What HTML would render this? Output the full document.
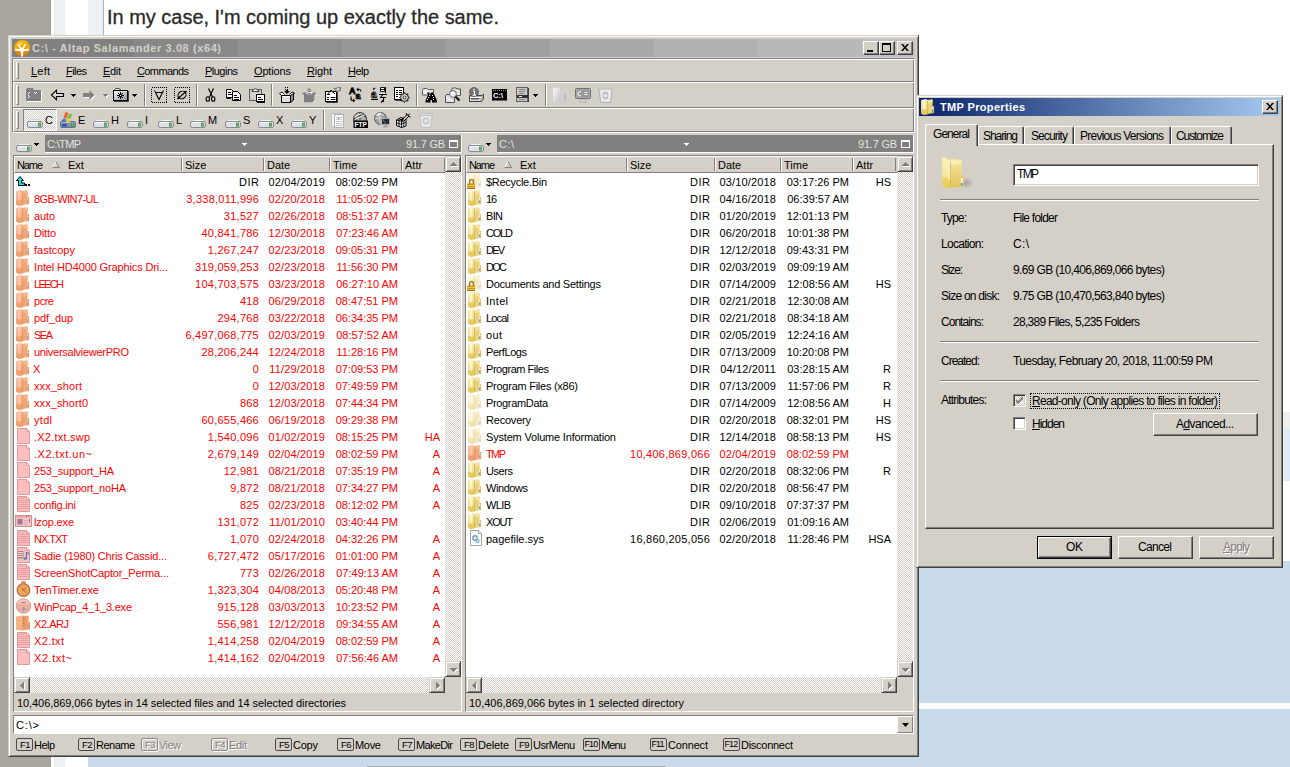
<!DOCTYPE html><html><head><meta charset="utf-8"><title>Altap Salamander</title><style>
html,body{margin:0;padding:0}
body{width:1290px;height:767px;overflow:hidden;background:#fff;position:relative;font:11px "Liberation Sans",sans-serif;color:#000}
body div{position:absolute;box-sizing:border-box}
.t{white-space:nowrap;line-height:13px;height:13px}
.r{color:#f00}
.n{letter-spacing:.25px}
.nm{letter-spacing:-.1px}
.g{color:#808080}
.d{font-size:12px;line-height:14px;height:14px}
u{text-decoration:underline}
.btn{background:#d4d0c8;border:1px solid;border-color:#fff #404040 #404040 #fff;box-shadow:inset -1px -1px 0 #808080}
.sb{background:#d4d0c8;border:1px solid;border-color:#d4d0c8 #404040 #404040 #d4d0c8;box-shadow:inset 1px 1px 0 #fff, inset -1px -1px 0 #808080}
.chk{background-color:#eae8e4;background-image:conic-gradient(#fff 25%,#d4d0c8 0 50%,#fff 0 75%,#d4d0c8 0);background-size:2px 2px}
svg{position:absolute;overflow:visible}
</style></head><body>
<div style="left:0px;top:0px;width:51px;height:767px;background:#aaa59f"></div>
<div style="left:50px;top:0px;width:1px;height:767px;background:#9f9a94"></div>
<div style="left:54px;top:0px;width:3px;height:767px;background:#ededec"></div>
<div style="left:57px;top:0px;width:8px;height:767px;background:#eef2f5"></div>
<div style="left:88px;top:0px;width:15px;height:35px;background:#eef2f4"></div>
<div style="left:103px;top:0px;width:1px;height:35px;background:#a8b4c0"></div>
<div class="t" style="left:107.0px;top:3px;letter-spacing:-0.02px;font-size:20px;line-height:28px;height:28px;color:#2a2a2a;-webkit-text-stroke:.3px #2a2a2a">In my case, I&#x27;m coming up exactly the same.</div>
<div style="left:1283px;top:412px;width:7px;height:17px;background:#eef0f0"></div>
<div style="left:1283px;top:429px;width:7px;height:52px;background:#e1ebf3"></div>
<div style="left:88px;top:561px;width:1202px;height:206px;background:#c9daea"></div>
<div style="left:919px;top:703px;width:371px;height:6px;background:#fff"></div>
<div style="left:367px;top:766px;width:299px;height:1px;background:#aaa"></div>
<div style="left:8px;top:35px;width:911px;height:722px;background:#d4d0c8;border:1px solid;border-color:#d4d0c8 #404040 #404040 #d4d0c8;box-shadow:inset 1px 1px 0 #fff, inset -1px -1px 0 #808080"></div>
<div style="left:12px;top:39px;width:122px;height:18px;background:#808080"></div>
<div style="left:134px;top:39px;width:104px;height:18px;background:#888888"></div>
<div style="left:238px;top:39px;width:104px;height:18px;background:#909090"></div>
<div style="left:342px;top:39px;width:104px;height:18px;background:#989898"></div>
<div style="left:446px;top:39px;width:104px;height:18px;background:#a0a0a0"></div>
<div style="left:550px;top:39px;width:104px;height:18px;background:#a8a8a8"></div>
<div style="left:654px;top:39px;width:104px;height:18px;background:#b0b0b0"></div>
<div style="left:758px;top:39px;width:104px;height:18px;background:#b8b8b8"></div>
<div style="left:862px;top:39px;width:53px;height:18px;background:#c0c0c0"></div>
<svg style="left:14px;top:40px" width="16" height="16" viewBox="0 0 16 16"><defs><linearGradient id="gsal" x1="0" y1="0" x2="0" y2="1"><stop offset="0" stop-color="#f9b406"/><stop offset=".6" stop-color="#f5a400"/><stop offset=".68" stop-color="#e88a00"/><stop offset="1" stop-color="#e07c00"/></linearGradient></defs><circle cx="8" cy="8" r="8" fill="url(#gsal)"/><circle cx="6.5" cy="3.5" r="1.8" fill="#fbd24a" opacity=".8"/><g stroke="#fff" stroke-linecap="round" fill="none"><path d="M8 15.6V10" stroke-width="2.2"/><path d="M8 10.5L2 9.8M8 10.5L14 9.8" stroke-width="1.9"/><path d="M7.6 9.5L4.2 4.6M8.4 9.5L11 4.6" stroke-width="1.7"/></g><circle cx="8" cy="10.2" r="1.7" fill="#fff"/></svg>
<div class="t" style="left:32.0px;top:42px;letter-spacing:0.589px;font-weight:bold;color:#d4d0c8">C:\ - Altap Salamander 3.08 (x64)</div>
<div class="btn" style="left:863px;top:41px;width:16px;height:14px;"><div style="left:3px;top:8px;width:6px;height:2px;background:#000"></div></div>
<div class="btn" style="left:879px;top:41px;width:16px;height:14px;"><div style="left:2px;top:1px;width:9px;height:9px;border:1px solid #000;border-top-width:2px"></div></div>
<div class="btn" style="left:897px;top:41px;width:16px;height:14px;"><svg style="left:3px;top:2px" width="8" height="7" viewBox="0 0 8 7"><path d="M0 0h2l2 2.5L6 0h2L5 3.5 8 7H6L4 4.5 2 7H0l3-3.5z" fill="#000"/></svg></div>
<div style="left:12px;top:58px;width:903px;height:75px;border:1px solid;border-color:#808080 #fff #fff #808080;box-shadow:inset 1px 1px 0 #fff, inset -1px -1px 0 #808080"></div>
<div style="left:13px;top:81px;width:901px;height:1px;background:#808080"></div>
<div style="left:13px;top:82px;width:901px;height:1px;background:#fff"></div>
<div style="left:13px;top:107px;width:901px;height:1px;background:#808080"></div>
<div style="left:13px;top:108px;width:901px;height:1px;background:#fff"></div>
<div style="left:16px;top:62px;width:3px;height:17px;border:1px solid;border-color:#fff #808080 #808080 #fff;background:#d4d0c8"></div>
<div style="left:16px;top:85px;width:3px;height:20px;border:1px solid;border-color:#fff #808080 #808080 #fff;background:#d4d0c8"></div>
<div style="left:16px;top:111px;width:3px;height:18px;border:1px solid;border-color:#fff #808080 #808080 #fff;background:#d4d0c8"></div>
<div class="t" style="left:31.0px;top:65px;letter-spacing:0.219px;"><u>L</u>eft</div>
<div class="t" style="left:66.0px;top:65px;letter-spacing:-0.555px;"><u>F</u>iles</div>
<div class="t" style="left:103.0px;top:65px;letter-spacing:-0.318px;"><u>E</u>dit</div>
<div class="t" style="left:137.0px;top:65px;letter-spacing:-0.605px;"><u>C</u>ommands</div>
<div class="t" style="left:205.0px;top:65px;letter-spacing:-0.513px;"><u>P</u>lugins</div>
<div class="t" style="left:254.0px;top:65px;letter-spacing:-0.151px;"><u>O</u>ptions</div>
<div class="t" style="left:307.0px;top:65px;letter-spacing:-0.168px;"><u>R</u>ight</div>
<div class="t" style="left:348.0px;top:65px;letter-spacing:-0.542px;"><u>H</u>elp</div>
<svg style="left:26px;top:87px" width="16" height="16" viewBox="0 0 16 16" ><path d="M1 4L2 2H8L9 4H16V15H1z" fill="#fff"/><path d="M0 3L1 1H7L8 3H15V14H0z" fill="#808080"/><path d="M2 6h1M3 5h1M2 8h1M3 9h1M2 10h1M8 5h1M9 6h1M10 5h1" stroke="#fff" stroke-width="1" shape-rendering="crispEdges"/></svg>
<svg style="left:49px;top:87px" width="16" height="16" viewBox="0 0 16 16" ><defs><linearGradient id="gb" x1="0" y1="0" x2="0" y2="1"><stop offset="0" stop-color="#fff"/><stop offset="1" stop-color="#b0b0b0"/></linearGradient></defs><path d="M2.5 8L7.5 3.2V6.5H14.5V9.5H7.5V12.8z" fill="url(#gb)" stroke="#000" stroke-width="1.1" stroke-linejoin="miter"/></svg>
<svg style="left:71px;top:94px" width="5" height="3" viewBox="0 0 5 3" shape-rendering="crispEdges"><path d="M0 0h5L2.5 3z" fill="#000"/></svg>
<svg style="left:81px;top:87px" width="16" height="16" viewBox="0 0 16 16" ><path d="M14.5 9L9.5 4V7H3V11H9.5V14z" fill="#fff"/><path d="M13.5 8L8.5 3V6H2V10H8.5V13z" fill="#808080"/></svg>
<svg style="left:104px;top:95px" width="5" height="3" viewBox="0 0 5 3" shape-rendering="crispEdges"><path d="M0 0h5L2.5 3z" fill="#fff"/></svg><svg style="left:103px;top:94px" width="5" height="3" viewBox="0 0 5 3" shape-rendering="crispEdges"><path d="M0 0h5L2.5 3z" fill="#808080"/></svg>
<svg style="left:113px;top:87px" width="16" height="16" viewBox="0 0 16 16" ><defs><linearGradient id="gfs" x1="0" y1="0" x2="1" y2="1"><stop offset="0" stop-color="#fff"/><stop offset="1" stop-color="#909090"/></linearGradient></defs><path d="M1.5 2.5Q2 1.5 3 1.5H6Q7 1.5 7.5 3" fill="#e8e8e8" stroke="#555" stroke-width="1"/><rect x="0.5" y="3.5" width="14" height="10" fill="url(#gfs)" stroke="#000"/><path d="M1 14.5H15.5V4" stroke="#404040" fill="none"/><path d="M7.5 5v7M4 8.5h7M5 6l5 5M10 6l-5 5" stroke="#000" stroke-width="1"/><rect x="7" y="8" width="1" height="1" fill="#fff"/></svg>
<svg style="left:132px;top:94px" width="5" height="3" viewBox="0 0 5 3" shape-rendering="crispEdges"><path d="M0 0h5L2.5 3z" fill="#000"/></svg>
<div style="left:144px;top:84px;width:1px;height:22px;background:#808080"></div><div style="left:145px;top:84px;width:1px;height:22px;background:#fff"></div>
<svg style="left:151px;top:87px" width="16" height="16" viewBox="0 0 16 16" ><rect x="0.5" y="0.5" width="15" height="15" fill="none" stroke="#000" stroke-width="1" stroke-dasharray="1 1" shape-rendering="crispEdges"/><path d="M3.5 3.5L8 12.5L12.5 3.5" fill="none" stroke="#000" stroke-width="1.1"/><path d="M4.5 5.5H11.5" stroke="#000" stroke-width="1"/></svg>
<svg style="left:174px;top:87px" width="16" height="16" viewBox="0 0 16 16" ><rect x="0.5" y="0.5" width="15" height="15" fill="none" stroke="#000" stroke-width="1" stroke-dasharray="1 1" shape-rendering="crispEdges"/><ellipse cx="8" cy="8" rx="4.2" ry="3.6" fill="none" stroke="#000" stroke-width="1.1" transform="rotate(-35 8 8)"/><path d="M3.5 12L12.5 4" stroke="#000" stroke-width="1.1"/><circle cx="11.3" cy="5" r="1" fill="#000"/><circle cx="4.7" cy="11" r="1" fill="#000"/></svg>
<div style="left:196px;top:84px;width:1px;height:22px;background:#808080"></div><div style="left:197px;top:84px;width:1px;height:22px;background:#fff"></div>
<svg style="left:203px;top:87px" width="16" height="16" viewBox="0 0 16 16" ><path d="M5.5 1.5L9.5 10M10.5 1.5L6.5 10" stroke="#000" stroke-width="1.2" fill="none"/><ellipse cx="4.8" cy="12" rx="1.7" ry="2.3" fill="none" stroke="#000" stroke-width="1.1"/><ellipse cx="10.2" cy="12" rx="1.7" ry="2.3" fill="none" stroke="#000" stroke-width="1.1"/></svg>
<svg style="left:226px;top:87px" width="16" height="16" viewBox="0 0 16 16" ><path d="M0.5 2.5H5.5L8.5 5.5V10.5H0.5z" fill="#fff" stroke="#000"/><path d="M1 11.5H9.5V6" stroke="#000" fill="none" opacity=".0"/><path d="M2 5.5h3M2 7.5h5" stroke="#000"/><path d="M0.5 11.5H5" stroke="#000"/><path d="M6.5 4.5H11.5L14.5 7.5V13.5H6.5z" fill="#fff" stroke="#000"/><path d="M7 14.5H15.5V8" stroke="#000" fill="none" opacity=".0"/><path d="M8 8.5h3M8 10.5h5M8 12.5h5" stroke="#000"/></svg>
<svg style="left:249px;top:87px" width="16" height="16" viewBox="0 0 16 16" ><rect x="0.5" y="2.5" width="12" height="11" fill="#c8c8c8" stroke="#606060"/><path d="M3 4.5Q3 2.5 5 2.5Q6.5 0.5 8 2.5Q10 2.5 10 4.5z" fill="#f0f0f0" stroke="#404040"/><path d="M2 5L11 12M2 8L8 13M5 5L11 9" stroke="#e8e8e8" stroke-width=".8"/><rect x="7.5" y="7.5" width="8" height="7" fill="#fff" stroke="#000"/><path d="M9 10.5h3M9 12.5h5" stroke="#000"/><path d="M8 15.5H16" stroke="#000"/></svg>
<div style="left:271px;top:84px;width:1px;height:22px;background:#808080"></div><div style="left:272px;top:84px;width:1px;height:22px;background:#fff"></div>
<svg style="left:279px;top:87px" width="16" height="16" viewBox="0 0 16 16" ><path d="M6 0.5h4M6 2.5h4" stroke="#000" stroke-dasharray="1 1" shape-rendering="crispEdges"/><path d="M5 4h6L8 7z" fill="#000"/><path d="M7 3h2v2h-2z" fill="#000"/><path d="M2.5 8.5L0.5 6.5L3 5L5.5 7.5M13.5 8.5L15.5 6L13 5L10.5 7.5" fill="#fff" stroke="#000" stroke-width=".9"/><path d="M2.5 8.5H11.5V15.5H2.5z" fill="#e0e0e0" stroke="#000"/><path d="M11.5 8.5L14.5 6.5V13L11.5 15.5z" fill="#909090" stroke="#000"/><path d="M3 9.5h8" stroke="#fff"/></svg>
<svg style="left:302px;top:87px" width="16" height="16" viewBox="0 0 16 16" ><path d="M3 9L1 7L4 6L6 8H10L12 6L15 7L13 9V14L11 16H4L3 15z" fill="#fff"/><path d="M2 8L0 6.5L3 5L5.5 7.5H9.5L12 5L14.5 6.5L12.5 8.5V13.5L10.5 15.5H3L2 14.5z" fill="#808080"/><path d="M7 1L9.5 3.5H4.5z" fill="#808080"/><path d="M5.5 4.5h3M5.5 6.5h3" stroke="#808080" shape-rendering="crispEdges"/><path d="M6.5 5.5h3" stroke="#fff" shape-rendering="crispEdges"/></svg>
<svg style="left:325px;top:87px" width="16" height="16" viewBox="0 0 16 16" ><rect x="0.5" y="4.5" width="11" height="10" fill="#fff" stroke="#000"/><path d="M1 15.5H12.5V5" stroke="#404040" fill="none"/><path d="M2 7.5h3M2 10.5h2M5.5 10.5h5M2 12.5h2M5.5 12.5h5" stroke="#000"/><path d="M2 8L6 3L10 7" fill="none" stroke="#000"/><path d="M6 4L9 7" stroke="#888" stroke-dasharray="1 1"/><path d="M9 1.5L15.5 0.5V3.5L11 4.5z" fill="#b0b0b0" stroke="#606060" stroke-width=".8"/><rect x="12" y="1.5" width="2" height="1.5" fill="#fff"/></svg>
<svg style="left:348px;top:87px" width="16" height="16" viewBox="0 0 16 16" ><text x="1" y="7" font-family="Liberation Sans" font-weight="bold" font-size="9" fill="#fff" stroke="#000" stroke-width=".9">A</text><text x="7.5" y="12" font-family="Liberation Sans" font-weight="bold" font-size="9" fill="#fff" stroke="#000" stroke-width=".9">a</text><path d="M9 2.5h2.5Q13 2.5 13 4.5" fill="none" stroke="#000" stroke-width="1.2"/><path d="M10.5 0.5L8.2 2.5L10.5 4.5z" fill="#000"/><path d="M3 9.5V12.5Q3 13.5 5 13.5" fill="none" stroke="#000" stroke-width="1.2"/><path d="M5 11.5L7.3 13.5L5 15.5z" fill="#000"/></svg>
<svg style="left:371px;top:87px" width="16" height="16" viewBox="0 0 16 16" ><path d="M2 2.5L4 1" stroke="#000" stroke-width="1.2"/><text x="0" y="11" font-family="Liberation Sans" font-weight="bold" font-size="10" fill="#fff" stroke="#000" stroke-width=".8">a</text><path d="M0 12.5H7" stroke="#000"/><path d="M9.5 0.5h4v4h-4zM9.5 2.5h4" fill="#fff" stroke="#000" stroke-width=".9"/><path d="M14.5 0v6" stroke="#000"/><path d="M8 7.5h8M12 7.5L9 11M10 10.5h5M12.5 10.5V15M12.5 13L10 15.5" fill="none" stroke="#000" stroke-width="1.1"/></svg>
<svg style="left:394px;top:87px" width="16" height="16" viewBox="0 0 16 16" ><rect x="0.5" y="0.5" width="9" height="12" fill="#fff" stroke="#000"/><path d="M1 13.5H10" stroke="#404040"/><path d="M2 3.5h2M5 3.5h3M2 5.5h2M5 5.5h3M2 7.5h2M5 7.5h3M2 9.5h2" stroke="#000" shape-rendering="crispEdges"/><g transform="translate(10.5 10.5)"><path d="M0 -5L1.2 -3.2L3.5 -3.5L3.2 -1.2L5 0L3.2 1.2L3.5 3.5L1.2 3.2L0 5L-1.2 3.2L-3.5 3.5L-3.2 1.2L-5 0L-3.2 -1.2L-3.5 -3.5L-1.2 -3.2z" fill="#d0d0d0" stroke="#000" stroke-width=".9"/><circle r="1.4" fill="#fff" stroke="#000" stroke-width=".8"/></g></svg>
<div style="left:416px;top:84px;width:1px;height:22px;background:#808080"></div><div style="left:417px;top:84px;width:1px;height:22px;background:#fff"></div>
<svg style="left:422px;top:87px" width="16" height="16" viewBox="0 0 16 16" ><path d="M0.5 3.5L1.5 1.5H5L6 2.5H11.5V8H0.5z" fill="#e8e8e8" stroke="#606060"/><path d="M1 4L8 8M3 3L10 7" stroke="#fff" stroke-width=".8"/><path d="M5 5.5h2.5v2h1v-2H11L12.5 8 15 13.5v2H10V13H8.5v2.5H3.5v-2L6 8z" fill="#000"/><path d="M5 12.5h2M11 12.5h2M6.5 8.5h1M9.5 8.5h1M5.5 10.5h1M10.5 10.5h1" stroke="#fff" stroke-dasharray="1 1" shape-rendering="crispEdges"/></svg>
<svg style="left:445px;top:87px" width="16" height="16" viewBox="0 0 16 16" ><path d="M6.5 3L7.5 1H11L12 2H15.5V8.5H6.5z" fill="#e8e8e8" stroke="#505050"/><path d="M0.5 9L1.5 7.5H5L6 8.5H9.5V15.5H0.5z" fill="#e0e0e0" stroke="#505050"/><path d="M7 4L14 8M1 10L8 15" stroke="#fff" stroke-width=".9"/><circle cx="8" cy="7" r="3.3" fill="#f4f4f4" stroke="#808080" stroke-width="1.2"/><circle cx="7.3" cy="6.2" r="1.4" fill="#fff"/><path d="M10.5 9.5L14.5 13.5" stroke="#000" stroke-width="2.2"/><path d="M10.8 9.2L14.2 12.6" stroke="#666" stroke-width=".8"/></svg>
<svg style="left:468px;top:87px" width="16" height="16" viewBox="0 0 16 16" ><path d="M1.5 8.5H14L15.5 7V12L13.5 14.5H1.5z" fill="#b8b8b8" stroke="#404040"/><path d="M2 10.5h11M2 13h10" stroke="#fff"/><path d="M3 11.8h8" stroke="#404040" stroke-width="1.2"/><circle cx="6" cy="5" r="4.6" fill="#707070" stroke="#505050" stroke-width=".6"/><path d="M5.2 4.5h1.3V8M4.6 8.2h3.2" stroke="#fff" stroke-width="1.2" fill="none"/><circle cx="6" cy="2.6" r=".9" fill="#fff"/></svg>
<svg style="left:492px;top:87px" width="16" height="16" viewBox="0 0 16 16" ><rect x="0" y="2" width="15" height="12" fill="#000"/><path d="M0 13.5H15" stroke="#606060"/><path d="M1 3.5h13" stroke="#909090" stroke-dasharray="1 1" shape-rendering="crispEdges"/><text x="1" y="10.5" font-family="Liberation Sans" font-weight="bold" font-size="7.5" fill="#fff">C:\</text></svg>
<svg style="left:516px;top:87px" width="16" height="16" viewBox="0 0 16 16" ><rect x="0.5" y="0.5" width="11" height="14" fill="#c8c8c8" stroke="#606060"/><path d="M12.5 1V15" stroke="#404040"/><path d="M3 2.5h6M3 4.5h6M3 6.5h5M3 12.5h6" stroke="#808080"/><rect x="1" y="8" width="11" height="3" fill="#303030"/><path d="M3 9.5h3" stroke="#fff"/></svg>
<svg style="left:533px;top:94px" width="5" height="3" viewBox="0 0 5 3" shape-rendering="crispEdges"><path d="M0 0h5L2.5 3z" fill="#000"/></svg>
<div style="left:545px;top:84px;width:1px;height:22px;background:#808080"></div><div style="left:546px;top:84px;width:1px;height:22px;background:#fff"></div>
<svg style="left:552px;top:87px" width="16" height="16" viewBox="0 0 16 16" ><defs><linearGradient id="gdf" x1="0" y1="0" x2="1" y2="1"><stop offset="0" stop-color="#fafafa"/><stop offset="1" stop-color="#c4c4c4"/></linearGradient></defs><path d="M7 1.5L12.5 0.8V14L7 15z" fill="#d0d0d0"/><rect x="12.5" y="7" width="1.5" height="7" fill="#b8b8b8"/><path d="M1 1.2L6.5 0.4L8 1.5V15.2L3 16L1 15z" fill="url(#gdf)"/></svg>
<svg style="left:575px;top:87px" width="16" height="16" viewBox="0 0 16 16" ><rect x="0.5" y="1.5" width="15" height="10" rx="1" fill="#a8a8a8" stroke="#707070"/><rect x="2" y="3" width="12" height="7" fill="#989898"/><path d="M6 5a2 2 0 1 0 0 3.5" fill="none" stroke="#f0f0f0" stroke-width="1.2"/><path d="M9.5 5.5h3M9.5 7.5h3" stroke="#f0f0f0" stroke-width="1.1"/><path d="M4.5 15Q5 12 8 12Q11 12 11.5 15z" fill="#d8d8d8" stroke="#a0a0a0" stroke-width=".6"/></svg>
<svg style="left:598px;top:87px" width="16" height="16" viewBox="0 0 16 16" ><path d="M0.8 1.5H14.2L12.5 15.5H2.8z" fill="#e4e4e4" stroke="#b0b0b0"/><path d="M1 1.8H14" stroke="#c8c8c8" stroke-width="1.5"/><circle cx="7.5" cy="8.5" r="2.8" fill="none" stroke="#b8b8b8" stroke-width="1.4"/><path d="M4 4v10M11 4v10" stroke="#f8f8f8" stroke-width="1"/></svg>
<div class="chk" style="left:23px;top:109px;width:34px;height:22px;border:1px solid;border-color:#808080 #fff #fff #808080"></div>
<svg style="left:27px;top:113px" width="16" height="16" viewBox="0 0 16 16" ><use href="#drv"/></svg>
<div class="t" style="left:45px;top:114px">C</div>
<svg style="left:60px;top:113px" width="16" height="16" viewBox="0 0 16 16" ><rect x="0.5" y="8.5" width="15" height="6" rx="1.6" fill="#8098b8" stroke="#60708c"/><path d="M2 9.6h12" stroke="#b8c8dc"/><rect x="2" y="10.6" width="5" height="3" fill="#3858a8"/><rect x="8" y="10.6" width="2.4" height="3" fill="#7c90a8"/><rect x="11" y="9.6" width="3" height="4" fill="#5a6470"/><rect x="11.6" y="10.1" width="1.8" height="3" fill="#38e028"/><path d="M3.2 5.5L5.2 -0.5Q7 -1.2 8.2 0.2L6.4 5.8Q4.8 4.6 3.2 5.5z" fill="#f0602a"/><path d="M1.2 8.6L2.9 6Q4.6 5.2 6.2 6.4L5.4 9Q3.5 7.8 1.2 8.6z" fill="#3a7ae0"/><path d="M8.9 0.6Q10.4 1.8 12.4 0.4L10.9 5.2Q9 6.2 7.2 5.2z" fill="#72c244"/><path d="M6.9 6Q8.9 7 10.6 6L9.7 9Q8 9.6 6.1 9z" fill="#f8c822"/></svg>
<div class="t" style="left:78px;top:114px">E</div>
<svg style="left:93px;top:113px" width="16" height="16" viewBox="0 0 16 16" ><use href="#drv"/></svg>
<div class="t" style="left:111px;top:114px">H</div>
<svg style="left:127px;top:113px" width="16" height="16" viewBox="0 0 16 16" ><use href="#drv"/></svg>
<div class="t" style="left:145px;top:114px">I</div>
<svg style="left:158px;top:113px" width="16" height="16" viewBox="0 0 16 16" ><use href="#drv"/></svg>
<div class="t" style="left:176px;top:114px">L</div>
<svg style="left:190px;top:113px" width="16" height="16" viewBox="0 0 16 16" ><use href="#drv"/></svg>
<div class="t" style="left:208px;top:114px">M</div>
<svg style="left:225px;top:113px" width="16" height="16" viewBox="0 0 16 16" ><use href="#drv"/></svg>
<div class="t" style="left:243px;top:114px">S</div>
<svg style="left:258px;top:113px" width="16" height="16" viewBox="0 0 16 16" ><use href="#drv"/></svg>
<div class="t" style="left:276px;top:114px">X</div>
<svg style="left:291px;top:113px" width="16" height="16" viewBox="0 0 16 16" ><use href="#drv"/></svg>
<div class="t" style="left:309px;top:114px">Y</div>
<div style="left:323px;top:110px;width:1px;height:20px;background:#808080"></div><div style="left:324px;top:110px;width:1px;height:20px;background:#fff"></div>
<svg style="left:329px;top:112px" width="16" height="16" viewBox="0 0 16 16" ><rect x="2.5" y="1.5" width="9" height="13" fill="#f4f4f4" stroke="#c0c0c0"/><rect x="5.5" y="2.5" width="9" height="13" fill="#fafafa" stroke="#b0b0b0"/><path d="M7 5.5h6M7 7.5h6M7 9.5h6M7 11.5h6M7 13.5h6" stroke="#c8c8c8"/><rect x="9" y="6" width="1" height="1" fill="#808080"/></svg>
<svg style="left:352px;top:112px" width="16" height="16" viewBox="0 0 16 16" ><circle cx="8" cy="7" r="6.5" fill="#b0b0b0" stroke="#404040"/><path d="M2 7Q8 1 14 5M3 10Q7 3 12 2M8 .5V8" stroke="#404040" stroke-width=".9" fill="none"/><path d="M3 5L9 1.5M4 7L12 3" stroke="#fff" stroke-width="1"/><rect x="1.5" y="8.5" width="14.5" height="7.5" fill="#000"/><text x="2.6" y="14.8" font-family="Liberation Sans" font-weight="bold" font-size="6.6" fill="#fff" textLength="12.4" lengthAdjust="spacingAndGlyphs">FTP</text></svg>
<svg style="left:374px;top:112px" width="16" height="16" viewBox="0 0 16 16" ><circle cx="6.5" cy="6.5" r="6" fill="#a0a0a0" stroke="#606060"/><path d="M2 4Q6 1 10 3M1 7Q5 5 8 6M6.5 .5Q4 6 6.5 12.5" stroke="#e0e0e0" stroke-width="1" fill="none"/><path d="M3 3L6 1.5" stroke="#fff" stroke-width="1.5"/><rect x="7.5" y="6.5" width="8" height="6" fill="#202830" stroke="#b0b0b0"/><path d="M8.5 7.5L12 12" stroke="#506070" stroke-width="1.5"/><path d="M10 13h3v1.5h-3zM8.5 15h6" stroke="#a0a0a0" fill="#c0c0c0" stroke-width=".8"/></svg>
<svg style="left:395px;top:112px" width="16" height="16" viewBox="0 0 16 16" ><path d="M1.5 8L6 5.5L11 7V14L6.5 15.5L1.5 13.5z" fill="#fff" stroke="#000"/><path d="M6.5 9.5V15.5M1.5 8L6.5 9.5L11 7M1.5 10.8L6.5 12.3L11 10M4 8.8V14.5M8.8 8.5V14.7M3.5 6.8L8.7 8.5M8.3 6.2L4 8.7" stroke="#000" stroke-width=".9" fill="none"/><path d="M7 8L12 2.5L14 4L9 9" fill="#d0d0d0" stroke="#000"/><path d="M11 1L12 3.5M14.5 1.5L13.5 3.5M15.5 5L13.5 4.5" stroke="#000" stroke-width="1"/><path d="M6.5 9.5L8 7" stroke="#000" stroke-width="2"/></svg>
<svg style="left:418px;top:112px" width="16" height="16" viewBox="0 0 16 16" ><rect x="1.5" y="1.5" width="13" height="2" fill="#e0e0e0" stroke="#c0c0c0"/><path d="M2 3.5H14L12.8 15.5H3.2z" fill="#e8e8e8" stroke="#c0c0c0"/><circle cx="8" cy="9" r="2.6" fill="none" stroke="#c0c0c0" stroke-width="1.3"/></svg>
<svg width="0" height="0" style="left:0;top:0"><defs>
<linearGradient id="gf" x1="0" y1="0" x2="0" y2="1"><stop offset="0" stop-color="#faf0b6"/><stop offset=".6" stop-color="#f3e292"/><stop offset=".66" stop-color="#ead06a"/><stop offset="1" stop-color="#e4c65a"/></linearGradient>
<linearGradient id="gs" x1="0" y1="0" x2="0" y2="1"><stop offset="0" stop-color="#f8c29e"/><stop offset=".6" stop-color="#f5b48a"/><stop offset=".66" stop-color="#f0a472"/><stop offset="1" stop-color="#ee9e6a"/></linearGradient>
<g id="fold"><path d="M6 1L11.6 0.6V14.2L6 15z" fill="#e9d27a"/><path d="M6.5 1L11.6 0.6V3.6L6.5 4.6z" fill="#f3e4a4"/><rect x="11.6" y="7" width="1.5" height="7.2" fill="#dfc25c"/><rect x="11.2" y="8.4" width="1" height="2" fill="#fff"/><rect x="11.2" y="10.4" width="1" height="2.8" fill="#4f9be4"/><path d="M0 1L5 0L6.6 1V15.4L2.4 16L0 14.6z" fill="url(#gf)"/><path d="M3.1 1V10.5" stroke="#fffdf0" stroke-width="1.2"/><path d="M6.4 1.5V15" stroke="#d0ae46" stroke-width=".8"/></g>
<g id="fsel"><path d="M6 1L11.6 0.6V14.2L6 15z" fill="#f1a676"/><path d="M6.5 1L11.6 0.6V3.6L6.5 4.6z" fill="#f5b68e"/><rect x="11.6" y="7" width="1.5" height="7.2" fill="#ee9a64"/><rect x="11.2" y="8.4" width="1" height="2" fill="#f8c4c4"/><rect x="11.2" y="10.4" width="1" height="2.8" fill="#a898b8"/><path d="M0 1L5 0L6.6 1V15.4L2.4 16L0 14.6z" fill="url(#gs)"/><path d="M3.1 1V10.5" stroke="#fccaca" stroke-width="1.2"/><path d="M6.4 1.5V15" stroke="#e48c5a" stroke-width=".8"/></g>
<g id="ffade" opacity=".5"><use href="#fold"/></g>
<g id="flock"><g opacity=".45"><use href="#fold"/></g><path d="M1.6 11V8.3a1.9 1.9 0 0 1 3.8 0V11" stroke="#a87a1c" stroke-width="1.5" fill="none"/><rect x="-1" y="10.6" width="8" height="5.4" fill="#c99420"/><rect x="-1" y="12" width="8" height="1" fill="#ecc858"/><rect x="-1" y="14" width="8" height="1" fill="#e0b840"/><rect x="-1" y="15" width="8" height="1" fill="#a87414"/></g>
<g id="blank"><path d="M1.5 0.5H10.5L13.5 3.5V15.5H1.5z" fill="#fcbebe" stroke="#dd9a9a"/><path d="M10.5 0.5V3.5H13.5z" fill="#fde0e0" stroke="#dd9a9a" stroke-width=".8"/></g>
<g id="text"><use href="#blank"/><path d="M2.5 4.5h10M2.5 6.5h10M2.5 8.5h10M2.5 10.5h10M2.5 12.5h10" stroke="#e89c9c" stroke-width="1"/><path d="M2.5 1.5l1 1l1-1l1 1l1-1l1 1l1-1l1 1" stroke="#e09090" stroke-width=".7" fill="none"/></g>
<g id="sys"><path d="M2.5 0.5H10.5L13.5 3.5V15.5H2.5z" fill="#fff" stroke="#a0a8b0"/><path d="M10.5 0.5V3.5H13.5" fill="#f0f0f0" stroke="#a0a8b0"/><circle cx="7" cy="8" r="2.2" fill="none" stroke="#70a0c8" stroke-width="1.4"/><circle cx="9.5" cy="11" r="1.5" fill="none" stroke="#70a0c8" stroke-width="1.2"/></g>
<g id="exe"><rect x="-0.5" y="2.5" width="16" height="11" fill="#f8c4c4" stroke="#c89090"/><rect x="0" y="3" width="15" height="1.6" fill="#e8a8a8"/><path d="M10 3.5h4" stroke="#b07070" stroke-dasharray="1 1"/><rect x="1.5" y="6" width="5" height="5.5" fill="#9a7c8c"/><path d="M8 7.5h4M8 9.5h4M8 11.5h3" stroke="#e8a0a0"/><rect x="13" y="6" width="1" height="3" fill="#8070a0"/></g>
<g id="media"><use href="#blank"/><rect x="1.5" y="4" width="6" height="7.5" fill="#b08888"/><path d="M2 5.5h5M2 7.5h5M2 9.5h5" stroke="#f8d0d0" stroke-width="1"/><path d="M10.5 5v6.5" stroke="#5078c0" stroke-width="1.2"/><ellipse cx="9.3" cy="11.6" rx="1.8" ry="1.4" fill="#5a80c8"/><path d="M10.5 5q2 .5 2.5 3" stroke="#5078c0" stroke-width="1.2" fill="none"/></g>
<g id="clock"><rect x="5.5" y="0.3" width="4" height="2.2" rx="1" fill="#d8a080" stroke="#b07858" stroke-width=".6"/><circle cx="7.5" cy="9" r="6.3" fill="#f0a45c" stroke="#b87444" stroke-width="1.3"/><path d="M5 6.5L10 11.5M10 6.5L6.5 10" stroke="#a05828" stroke-width=".9"/></g>
<g id="pcap"><circle cx="7.5" cy="8" r="7.3" fill="#eeb0a0" stroke="#c89088" stroke-width=".8"/><path d="M1.5 5a7 7 0 0 1 12 0q-6 2-12 0z" fill="#f6c8b8"/><path d="M3 11q4 3 9 0" stroke="#c8a0a8" fill="none"/><path d="M7 9l2 1-1.5 3.5z" fill="#7088c8"/><path d="M5 4.5h5" stroke="#b08080" stroke-width="1.2"/></g>
<g id="arj"><path d="M0 1.5L7 0.5V15.5L0 15z" fill="#f5b283"/><path d="M7 0.5L12.5 1V14.5L7 15.5z" fill="#ef9c66"/><rect x="12.5" y="7" width="1.5" height="7.5" fill="#e89060"/><rect x="12.2" y="10" width="1" height="3" fill="#b0a0c0"/><path d="M7.5 2v10" stroke="#a87858" stroke-width="1.6" stroke-dasharray="1 1"/><rect x="6.5" y="12" width="2" height="2.5" fill="#c8a898"/></g>
<g id="up"><path d="M4 3.5L0.5 7.5H2.5V12.5H8.5V10H5.5V7.5H7.5z" fill="#00e8e8" stroke="#000" stroke-width="1" stroke-linejoin="miter"/><rect x="9" y="11" width="2" height="2" fill="#000"/><rect x="12" y="11" width="2" height="2" fill="#000"/></g>
<g id="drv"><path d="M3.5 6.5h9l2 2.5h-13z" fill="#f4f4f8" stroke="#c4c4ca" stroke-width=".7"/><rect x="0.5" y="8.5" width="15" height="6" rx="1.6" fill="#dddfe9" stroke="#888a93"/><path d="M2 9.6h12" stroke="#fff" stroke-width="1"/><rect x="11" y="9.6" width="3" height="4" fill="#6a6e74"/><rect x="11.6" y="10.1" width="1.8" height="3" fill="#38e028"/></g>
</defs></svg>

<div style="left:45px;top:135px;width:416px;height:17px;background:#808080"></div>
<div style="left:45px;top:152px;width:417px;height:1px;background:#fff"></div>
<div style="left:461px;top:135px;width:1px;height:18px;background:#fff"></div>
<div class="t" style="left:47.0px;top:138px;letter-spacing:-0.656px;color:#e6e3dc">C:\TMP</div>
<svg style="left:16px;top:137px" width="16" height="16" viewBox="0 0 16 16"><use href="#drv"/></svg>
<svg style="left:34px;top:143px" width="5" height="3" viewBox="0 0 5 3" shape-rendering="crispEdges"><path d="M0 0h5L2.5 3z" fill="#000"/></svg>
<svg style="left:242px;top:143px" width="5" height="3" viewBox="0 0 5 3" shape-rendering="crispEdges"><path d="M0 0h5L2.5 3z" fill="#fff"/></svg>
<div class="t" style="right:845px;top:138px;color:#e6e3dc;letter-spacing:-.2px">91.7 GB</div>
<div style="left:449px;top:140px;width:9px;height:8px;border:1px solid #fff;border-top-width:2px"></div>
<div style="left:13px;top:155px;width:449px;height:557px;border:1px solid;border-color:#808080 #fff #fff #808080;background:#fff"></div>
<div style="left:14px;top:156px;width:431px;height:17px;background:#d4d0c8;border-top:1px solid #fff;border-left:1px solid #fff;border-bottom:1px solid #808080"></div>
<div class="t" style="left:17.0px;top:159px;letter-spacing:-1.115px;">Name</div>
<div class="t" style="left:68px;top:159px;">Ext</div>
<svg style="left:52px;top:161px" width="8" height="7" viewBox="0 0 8 7"><path d="M0.5 6.5L4 0.5" stroke="#fff" fill="none"/><path d="M4 0.5L7.5 6.5H0.5" stroke="#808080" fill="none"/></svg>
<div style="left:181px;top:158px;width:1px;height:13px;background:#808080"></div>
<div style="left:182px;top:158px;width:1px;height:13px;background:#fff"></div>
<div class="t" style="left:185px;top:159px;">Size</div>
<div style="left:263px;top:158px;width:1px;height:13px;background:#808080"></div>
<div style="left:264px;top:158px;width:1px;height:13px;background:#fff"></div>
<div class="t" style="left:267px;top:159px;">Date</div>
<div style="left:329px;top:158px;width:1px;height:13px;background:#808080"></div>
<div style="left:330px;top:158px;width:1px;height:13px;background:#fff"></div>
<div class="t" style="left:333px;top:159px;">Time</div>
<div style="left:401px;top:158px;width:1px;height:13px;background:#808080"></div>
<div style="left:402px;top:158px;width:1px;height:13px;background:#fff"></div>
<div class="t" style="left:405px;top:159px;">Attr</div>
<div style="left:444px;top:158px;width:1px;height:13px;background:#808080"></div>
<div class="chk" style="left:445px;top:156px;width:16px;height:521px;"></div>
<div class="sb" style="left:445px;top:156px;width:16px;height:16px;"><svg style="left:4px;top:5px" width="7" height="4" viewBox="0 0 7 4" shape-rendering="crispEdges"><path d="M1 5h7L4.5 1z" fill="#fff"/><path d="M0 4h7L3.5 0z" fill="#808080"/></svg></div>
<div class="sb" style="left:445px;top:661px;width:16px;height:16px;"><svg style="left:4px;top:6px" width="7" height="4" viewBox="0 0 7 4" shape-rendering="crispEdges"><path d="M1 1h7L4.5 5z" fill="#fff"/><path d="M0 0h7L3.5 4z" fill="#808080"/></svg></div>
<div class="chk" style="left:14px;top:677px;width:431px;height:16px;"></div>
<div class="sb" style="left:14px;top:677px;width:16px;height:16px;"><svg style="left:5px;top:4px" width="4" height="7" viewBox="0 0 4 7" shape-rendering="crispEdges"><path d="M5 1v7L1 4.5z" fill="#fff"/><path d="M4 0v7L0 3.5z" fill="#808080"/></svg></div>
<div class="sb" style="left:429px;top:677px;width:16px;height:16px;"><svg style="left:6px;top:4px" width="4" height="7" viewBox="0 0 4 7" shape-rendering="crispEdges"><path d="M1 1v7L5 4.5z" fill="#fff"/><path d="M0 0v7L4 3.5z" fill="#808080"/></svg></div>
<div style="left:445px;top:677px;width:16px;height:16px;background:#d4d0c8"></div>
<div style="left:14px;top:693px;width:447px;height:18px;background:#d4d0c8"></div>
<div class="t" style="left:17.0px;top:697px;letter-spacing:-0.072px;">10,406,869,066 bytes in 14 selected files and 14 selected directories</div>
<svg style="left:16px;top:173px" width="16" height="16" viewBox="0 0 16 16"><use href="#up"/></svg>
<div class="t nm" style="left:33px;top:176px;"></div>
<div class="t" style="right:1030.5px;top:176px;letter-spacing:.5px">DIR</div>
<div class="t" style="right:965px;top:176px;letter-spacing:.15px">02/04/2019</div>
<div class="t" style="right:892px;top:176px;">08:02:59 PM</div>
<svg style="left:16px;top:190px" width="16" height="16" viewBox="0 0 16 16"><use href="#fsel"/></svg>
<div class="t r" style="left:34.0px;top:193px;letter-spacing:-0.591px;">8GB-WIN7-UL</div>
<div class="t n r" style="right:1031px;top:193px;">3,338,011,996</div>
<div class="t r" style="right:965px;top:193px;letter-spacing:.15px">02/20/2018</div>
<div class="t r" style="right:892px;top:193px;">11:05:02 PM</div>
<svg style="left:16px;top:207px" width="16" height="16" viewBox="0 0 16 16"><use href="#fsel"/></svg>
<div class="t r" style="left:34.0px;top:210px;letter-spacing:-0.135px;">auto</div>
<div class="t n r" style="right:1031px;top:210px;">31,527</div>
<div class="t r" style="right:965px;top:210px;letter-spacing:.15px">02/26/2018</div>
<div class="t r" style="right:892px;top:210px;">08:51:37 AM</div>
<svg style="left:16px;top:224px" width="16" height="16" viewBox="0 0 16 16"><use href="#fsel"/></svg>
<div class="t r" style="left:34.0px;top:227px;letter-spacing:-0.156px;">Ditto</div>
<div class="t n r" style="right:1031px;top:227px;">40,841,786</div>
<div class="t r" style="right:965px;top:227px;letter-spacing:.15px">12/30/2018</div>
<div class="t r" style="right:892px;top:227px;">07:23:46 AM</div>
<svg style="left:16px;top:241px" width="16" height="16" viewBox="0 0 16 16"><use href="#fsel"/></svg>
<div class="t r" style="left:34.0px;top:244px;letter-spacing:0.004px;">fastcopy</div>
<div class="t n r" style="right:1031px;top:244px;">1,267,247</div>
<div class="t r" style="right:965px;top:244px;letter-spacing:.15px">02/23/2018</div>
<div class="t r" style="right:892px;top:244px;">09:05:31 PM</div>
<svg style="left:16px;top:258px" width="16" height="16" viewBox="0 0 16 16"><use href="#fsel"/></svg>
<div class="t r" style="left:34.0px;top:261px;letter-spacing:-0.131px;">Intel HD4000 Graphics Dri...</div>
<div class="t n r" style="right:1031px;top:261px;">319,059,253</div>
<div class="t r" style="right:965px;top:261px;letter-spacing:.15px">02/23/2018</div>
<div class="t r" style="right:892px;top:261px;">11:56:30 PM</div>
<svg style="left:16px;top:275px" width="16" height="16" viewBox="0 0 16 16"><use href="#fsel"/></svg>
<div class="t r" style="left:34.0px;top:278px;letter-spacing:-1.668px;">LEECH</div>
<div class="t n r" style="right:1031px;top:278px;">104,703,575</div>
<div class="t r" style="right:965px;top:278px;letter-spacing:.15px">03/23/2018</div>
<div class="t r" style="right:892px;top:278px;">06:27:10 AM</div>
<svg style="left:16px;top:292px" width="16" height="16" viewBox="0 0 16 16"><use href="#fsel"/></svg>
<div class="t r" style="left:34.0px;top:295px;letter-spacing:-0.469px;">pcre</div>
<div class="t n r" style="right:1031px;top:295px;">418</div>
<div class="t r" style="right:965px;top:295px;letter-spacing:.15px">06/29/2018</div>
<div class="t r" style="right:892px;top:295px;">08:47:51 PM</div>
<svg style="left:16px;top:309px" width="16" height="16" viewBox="0 0 16 16"><use href="#fsel"/></svg>
<div class="t r" style="left:34.0px;top:312px;letter-spacing:-0.128px;">pdf_dup</div>
<div class="t n r" style="right:1031px;top:312px;">294,768</div>
<div class="t r" style="right:965px;top:312px;letter-spacing:.15px">03/22/2018</div>
<div class="t r" style="right:892px;top:312px;">06:34:35 PM</div>
<svg style="left:16px;top:326px" width="16" height="16" viewBox="0 0 16 16"><use href="#fsel"/></svg>
<div class="t r" style="left:34.0px;top:329px;letter-spacing:-1.508px;">SEA</div>
<div class="t n r" style="right:1031px;top:329px;">6,497,068,775</div>
<div class="t r" style="right:965px;top:329px;letter-spacing:.15px">02/03/2019</div>
<div class="t r" style="right:892px;top:329px;">08:57:52 AM</div>
<svg style="left:16px;top:343px" width="16" height="16" viewBox="0 0 16 16"><use href="#fsel"/></svg>
<div class="t r" style="left:34.0px;top:346px;letter-spacing:-0.273px;">universalviewerPRO</div>
<div class="t n r" style="right:1031px;top:346px;">28,206,244</div>
<div class="t r" style="right:965px;top:346px;letter-spacing:.15px">12/24/2018</div>
<div class="t r" style="right:892px;top:346px;">11:28:16 PM</div>
<svg style="left:16px;top:360px" width="16" height="16" viewBox="0 0 16 16"><use href="#fsel"/></svg>
<div class="t nm r" style="left:33px;top:363px;">X</div>
<div class="t n r" style="right:1031px;top:363px;">0</div>
<div class="t r" style="right:965px;top:363px;letter-spacing:.15px">11/29/2018</div>
<div class="t r" style="right:892px;top:363px;">07:09:53 PM</div>
<svg style="left:16px;top:377px" width="16" height="16" viewBox="0 0 16 16"><use href="#fsel"/></svg>
<div class="t r" style="left:34.0px;top:380px;letter-spacing:0.115px;">xxx_short</div>
<div class="t n r" style="right:1031px;top:380px;">0</div>
<div class="t r" style="right:965px;top:380px;letter-spacing:.15px">12/03/2018</div>
<div class="t r" style="right:892px;top:380px;">07:49:59 PM</div>
<svg style="left:16px;top:394px" width="16" height="16" viewBox="0 0 16 16"><use href="#fsel"/></svg>
<div class="t r" style="left:34.0px;top:397px;letter-spacing:0.09px;">xxx_short0</div>
<div class="t n r" style="right:1031px;top:397px;">868</div>
<div class="t r" style="right:965px;top:397px;letter-spacing:.15px">12/03/2018</div>
<div class="t r" style="right:892px;top:397px;">07:44:34 PM</div>
<svg style="left:16px;top:411px" width="16" height="16" viewBox="0 0 16 16"><use href="#fsel"/></svg>
<div class="t r" style="left:34.0px;top:414px;letter-spacing:0.292px;">ytdl</div>
<div class="t n r" style="right:1031px;top:414px;">60,655,466</div>
<div class="t r" style="right:965px;top:414px;letter-spacing:.15px">06/19/2018</div>
<div class="t r" style="right:892px;top:414px;">09:29:38 PM</div>
<svg style="left:16px;top:428px" width="16" height="16" viewBox="0 0 16 16"><use href="#blank"/></svg>
<div class="t r" style="left:34.0px;top:431px;letter-spacing:0.22px;">.X2.txt.swp</div>
<div class="t n r" style="right:1031px;top:431px;">1,540,096</div>
<div class="t r" style="right:965px;top:431px;letter-spacing:.15px">01/02/2019</div>
<div class="t r" style="right:892px;top:431px;">08:15:25 PM</div>
<div class="t r" style="right:850px;top:431px;">HA</div>
<svg style="left:16px;top:445px" width="16" height="16" viewBox="0 0 16 16"><use href="#blank"/></svg>
<div class="t r" style="left:34.0px;top:448px;letter-spacing:0.511px;">.X2.txt.un~</div>
<div class="t n r" style="right:1031px;top:448px;">2,679,149</div>
<div class="t r" style="right:965px;top:448px;letter-spacing:.15px">02/04/2019</div>
<div class="t r" style="right:892px;top:448px;">08:02:59 PM</div>
<div class="t r" style="right:850px;top:448px;">A</div>
<svg style="left:16px;top:462px" width="16" height="16" viewBox="0 0 16 16"><use href="#blank"/></svg>
<div class="t r" style="left:34.0px;top:465px;letter-spacing:-0.197px;">253_support_HA</div>
<div class="t n r" style="right:1031px;top:465px;">12,981</div>
<div class="t r" style="right:965px;top:465px;letter-spacing:.15px">08/21/2018</div>
<div class="t r" style="right:892px;top:465px;">07:35:19 PM</div>
<div class="t r" style="right:850px;top:465px;">A</div>
<svg style="left:16px;top:479px" width="16" height="16" viewBox="0 0 16 16"><use href="#blank"/></svg>
<div class="t r" style="left:34.0px;top:482px;letter-spacing:-0.186px;">253_support_noHA</div>
<div class="t n r" style="right:1031px;top:482px;">9,872</div>
<div class="t r" style="right:965px;top:482px;letter-spacing:.15px">08/21/2018</div>
<div class="t r" style="right:892px;top:482px;">07:34:27 PM</div>
<div class="t r" style="right:850px;top:482px;">A</div>
<svg style="left:16px;top:496px" width="16" height="16" viewBox="0 0 16 16"><use href="#text"/></svg>
<div class="t r" style="left:34.0px;top:499px;letter-spacing:-0.158px;">config.ini</div>
<div class="t n r" style="right:1031px;top:499px;">825</div>
<div class="t r" style="right:965px;top:499px;letter-spacing:.15px">02/23/2018</div>
<div class="t r" style="right:892px;top:499px;">08:12:02 PM</div>
<div class="t r" style="right:850px;top:499px;">A</div>
<svg style="left:16px;top:513px" width="16" height="16" viewBox="0 0 16 16"><use href="#exe"/></svg>
<div class="t r" style="left:34.0px;top:516px;letter-spacing:-0.138px;">lzop.exe</div>
<div class="t n r" style="right:1031px;top:516px;">131,072</div>
<div class="t r" style="right:965px;top:516px;letter-spacing:.15px">11/01/2010</div>
<div class="t r" style="right:892px;top:516px;">03:40:44 PM</div>
<svg style="left:16px;top:530px" width="16" height="16" viewBox="0 0 16 16"><use href="#text"/></svg>
<div class="t r" style="left:34.0px;top:533px;letter-spacing:-1.022px;">NX.TXT</div>
<div class="t n r" style="right:1031px;top:533px;">1,070</div>
<div class="t r" style="right:965px;top:533px;letter-spacing:.15px">02/24/2018</div>
<div class="t r" style="right:892px;top:533px;">04:32:26 PM</div>
<div class="t r" style="right:850px;top:533px;">A</div>
<svg style="left:16px;top:547px" width="16" height="16" viewBox="0 0 16 16"><use href="#media"/></svg>
<div class="t r" style="left:34.0px;top:550px;letter-spacing:-0.169px;">Sadie (1980) Chris Cassid...</div>
<div class="t n r" style="right:1031px;top:550px;">6,727,472</div>
<div class="t r" style="right:965px;top:550px;letter-spacing:.15px">05/17/2016</div>
<div class="t r" style="right:892px;top:550px;">01:01:00 PM</div>
<div class="t r" style="right:850px;top:550px;">A</div>
<svg style="left:16px;top:564px" width="16" height="16" viewBox="0 0 16 16"><use href="#text"/></svg>
<div class="t r" style="left:34.0px;top:567px;letter-spacing:-0.133px;">ScreenShotCaptor_Perma...</div>
<div class="t n r" style="right:1031px;top:567px;">773</div>
<div class="t r" style="right:965px;top:567px;letter-spacing:.15px">02/26/2018</div>
<div class="t r" style="right:892px;top:567px;">07:49:13 AM</div>
<div class="t r" style="right:850px;top:567px;">A</div>
<svg style="left:16px;top:581px" width="16" height="16" viewBox="0 0 16 16"><use href="#clock"/></svg>
<div class="t r" style="left:34.0px;top:584px;letter-spacing:-0.057px;">TenTimer.exe</div>
<div class="t n r" style="right:1031px;top:584px;">1,323,304</div>
<div class="t r" style="right:965px;top:584px;letter-spacing:.15px">04/08/2013</div>
<div class="t r" style="right:892px;top:584px;">05:20:48 PM</div>
<div class="t r" style="right:850px;top:584px;">A</div>
<svg style="left:16px;top:598px" width="16" height="16" viewBox="0 0 16 16"><use href="#pcap"/></svg>
<div class="t r" style="left:34.0px;top:601px;letter-spacing:-0.22px;">WinPcap_4_1_3.exe</div>
<div class="t n r" style="right:1031px;top:601px;">915,128</div>
<div class="t r" style="right:965px;top:601px;letter-spacing:.15px">03/03/2013</div>
<div class="t r" style="right:892px;top:601px;">10:23:52 PM</div>
<div class="t r" style="right:850px;top:601px;">A</div>
<svg style="left:16px;top:615px" width="16" height="16" viewBox="0 0 16 16"><use href="#arj"/></svg>
<div class="t r" style="left:34.0px;top:618px;letter-spacing:-0.459px;">X2.ARJ</div>
<div class="t n r" style="right:1031px;top:618px;">556,981</div>
<div class="t r" style="right:965px;top:618px;letter-spacing:.15px">12/12/2018</div>
<div class="t r" style="right:892px;top:618px;">09:34:55 AM</div>
<div class="t r" style="right:850px;top:618px;">A</div>
<svg style="left:16px;top:632px" width="16" height="16" viewBox="0 0 16 16"><use href="#text"/></svg>
<div class="t r" style="left:34.0px;top:635px;letter-spacing:0.375px;">X2.txt</div>
<div class="t n r" style="right:1031px;top:635px;">1,414,258</div>
<div class="t r" style="right:965px;top:635px;letter-spacing:.15px">02/04/2019</div>
<div class="t r" style="right:892px;top:635px;">08:02:59 PM</div>
<div class="t r" style="right:850px;top:635px;">A</div>
<svg style="left:16px;top:649px" width="16" height="16" viewBox="0 0 16 16"><use href="#blank"/></svg>
<div class="t r" style="left:34.0px;top:652px;letter-spacing:0.576px;">X2.txt~</div>
<div class="t n r" style="right:1031px;top:652px;">1,414,162</div>
<div class="t r" style="right:965px;top:652px;letter-spacing:.15px">02/04/2019</div>
<div class="t r" style="right:892px;top:652px;">07:56:46 AM</div>
<div class="t r" style="right:850px;top:652px;">A</div>
<div style="left:497px;top:135px;width:416px;height:17px;background:#808080"></div>
<div style="left:497px;top:152px;width:417px;height:1px;background:#fff"></div>
<div style="left:913px;top:135px;width:1px;height:18px;background:#fff"></div>
<div class="t" style="left:499.0px;top:138px;letter-spacing:0.469px;color:#e6e3dc">C:\</div>
<svg style="left:468px;top:137px" width="16" height="16" viewBox="0 0 16 16"><use href="#drv"/></svg>
<svg style="left:486px;top:143px" width="5" height="3" viewBox="0 0 5 3" shape-rendering="crispEdges"><path d="M0 0h5L2.5 3z" fill="#000"/></svg>
<svg style="left:684px;top:143px" width="5" height="3" viewBox="0 0 5 3" shape-rendering="crispEdges"><path d="M0 0h5L2.5 3z" fill="#fff"/></svg>
<div class="t" style="right:393px;top:138px;color:#e6e3dc;letter-spacing:-.2px">91.7 GB</div>
<div style="left:901px;top:140px;width:9px;height:8px;border:1px solid #fff;border-top-width:2px"></div>
<div style="left:465px;top:155px;width:449px;height:557px;border:1px solid;border-color:#808080 #fff #fff #808080;background:#fff"></div>
<div style="left:466px;top:156px;width:431px;height:17px;background:#d4d0c8;border-top:1px solid #fff;border-left:1px solid #fff;border-bottom:1px solid #808080"></div>
<div class="t" style="left:469.0px;top:159px;letter-spacing:-1.115px;">Name</div>
<div class="t" style="left:520px;top:159px;">Ext</div>
<svg style="left:504px;top:161px" width="8" height="7" viewBox="0 0 8 7"><path d="M0.5 6.5L4 0.5" stroke="#fff" fill="none"/><path d="M4 0.5L7.5 6.5H0.5" stroke="#808080" fill="none"/></svg>
<div style="left:626px;top:158px;width:1px;height:13px;background:#808080"></div>
<div style="left:627px;top:158px;width:1px;height:13px;background:#fff"></div>
<div class="t" style="left:630px;top:159px;">Size</div>
<div style="left:714px;top:158px;width:1px;height:13px;background:#808080"></div>
<div style="left:715px;top:158px;width:1px;height:13px;background:#fff"></div>
<div class="t" style="left:718px;top:159px;">Date</div>
<div style="left:780px;top:158px;width:1px;height:13px;background:#808080"></div>
<div style="left:781px;top:158px;width:1px;height:13px;background:#fff"></div>
<div class="t" style="left:784px;top:159px;">Time</div>
<div style="left:852px;top:158px;width:1px;height:13px;background:#808080"></div>
<div style="left:853px;top:158px;width:1px;height:13px;background:#fff"></div>
<div class="t" style="left:856px;top:159px;">Attr</div>
<div style="left:895px;top:158px;width:1px;height:13px;background:#808080"></div>
<div class="chk" style="left:897px;top:156px;width:16px;height:521px;"></div>
<div class="sb" style="left:897px;top:156px;width:16px;height:16px;"><svg style="left:4px;top:5px" width="7" height="4" viewBox="0 0 7 4" shape-rendering="crispEdges"><path d="M1 5h7L4.5 1z" fill="#fff"/><path d="M0 4h7L3.5 0z" fill="#808080"/></svg></div>
<div class="sb" style="left:897px;top:661px;width:16px;height:16px;"><svg style="left:4px;top:6px" width="7" height="4" viewBox="0 0 7 4" shape-rendering="crispEdges"><path d="M1 1h7L4.5 5z" fill="#fff"/><path d="M0 0h7L3.5 4z" fill="#808080"/></svg></div>
<div class="chk" style="left:466px;top:677px;width:431px;height:16px;"></div>
<div class="sb" style="left:466px;top:677px;width:16px;height:16px;"><svg style="left:5px;top:4px" width="4" height="7" viewBox="0 0 4 7" shape-rendering="crispEdges"><path d="M5 1v7L1 4.5z" fill="#fff"/><path d="M4 0v7L0 3.5z" fill="#808080"/></svg></div>
<div class="sb" style="left:881px;top:677px;width:16px;height:16px;"><svg style="left:6px;top:4px" width="4" height="7" viewBox="0 0 4 7" shape-rendering="crispEdges"><path d="M1 1v7L5 4.5z" fill="#fff"/><path d="M0 0v7L4 3.5z" fill="#808080"/></svg></div>
<div style="left:897px;top:677px;width:16px;height:16px;background:#d4d0c8"></div>
<div style="left:466px;top:693px;width:447px;height:18px;background:#d4d0c8"></div>
<div class="t" style="left:469.0px;top:697px;letter-spacing:-0.02px;">10,406,869,066 bytes in 1 selected directory</div>
<svg style="left:468px;top:173px" width="16" height="16" viewBox="0 0 16 16"><use href="#flock"/></svg>
<div class="t" style="left:486.0px;top:176px;letter-spacing:-0.291px;">$Recycle.Bin</div>
<div class="t" style="right:579.5px;top:176px;letter-spacing:.5px">DIR</div>
<div class="t" style="right:514px;top:176px;letter-spacing:.15px">03/10/2018</div>
<div class="t" style="right:441px;top:176px;">03:17:26 PM</div>
<div class="t" style="right:399px;top:176px;">HS</div>
<svg style="left:468px;top:190px" width="16" height="16" viewBox="0 0 16 16"><use href="#fold"/></svg>
<div class="t" style="left:486.0px;top:193px;letter-spacing:-1.234px;">16</div>
<div class="t" style="right:579.5px;top:193px;letter-spacing:.5px">DIR</div>
<div class="t" style="right:514px;top:193px;letter-spacing:.15px">04/16/2018</div>
<div class="t" style="right:441px;top:193px;">06:39:57 AM</div>
<svg style="left:468px;top:207px" width="16" height="16" viewBox="0 0 16 16"><use href="#fold"/></svg>
<div class="t" style="left:486.0px;top:210px;letter-spacing:-0.672px;">BIN</div>
<div class="t" style="right:579.5px;top:210px;letter-spacing:.5px">DIR</div>
<div class="t" style="right:514px;top:210px;letter-spacing:.15px">01/20/2019</div>
<div class="t" style="right:441px;top:210px;">12:01:13 PM</div>
<svg style="left:468px;top:224px" width="16" height="16" viewBox="0 0 16 16"><use href="#fold"/></svg>
<div class="t" style="left:486.0px;top:227px;letter-spacing:-1.188px;">COLD</div>
<div class="t" style="right:579.5px;top:227px;letter-spacing:.5px">DIR</div>
<div class="t" style="right:514px;top:227px;letter-spacing:.15px">06/20/2018</div>
<div class="t" style="right:441px;top:227px;">10:01:38 PM</div>
<svg style="left:468px;top:241px" width="16" height="16" viewBox="0 0 16 16"><use href="#fold"/></svg>
<div class="t" style="left:486.0px;top:244px;letter-spacing:-1.812px;">DEV</div>
<div class="t" style="right:579.5px;top:244px;letter-spacing:.5px">DIR</div>
<div class="t" style="right:514px;top:244px;letter-spacing:.15px">12/12/2018</div>
<div class="t" style="right:441px;top:244px;">09:43:31 PM</div>
<svg style="left:468px;top:258px" width="16" height="16" viewBox="0 0 16 16"><use href="#fold"/></svg>
<div class="t" style="left:486.0px;top:261px;letter-spacing:-1.719px;">DOC</div>
<div class="t" style="right:579.5px;top:261px;letter-spacing:.5px">DIR</div>
<div class="t" style="right:514px;top:261px;letter-spacing:.15px">02/03/2019</div>
<div class="t" style="right:441px;top:261px;">09:09:19 AM</div>
<svg style="left:468px;top:275px" width="16" height="16" viewBox="0 0 16 16"><use href="#flock"/></svg>
<div class="t" style="left:486.0px;top:278px;letter-spacing:-0.231px;">Documents and Settings</div>
<div class="t" style="right:579.5px;top:278px;letter-spacing:.5px">DIR</div>
<div class="t" style="right:514px;top:278px;letter-spacing:.15px">07/14/2009</div>
<div class="t" style="right:441px;top:278px;">12:08:56 AM</div>
<div class="t" style="right:399px;top:278px;">HS</div>
<svg style="left:468px;top:292px" width="16" height="16" viewBox="0 0 16 16"><use href="#fold"/></svg>
<div class="t" style="left:486.0px;top:295px;letter-spacing:0.301px;">Intel</div>
<div class="t" style="right:579.5px;top:295px;letter-spacing:.5px">DIR</div>
<div class="t" style="right:514px;top:295px;letter-spacing:.15px">02/21/2018</div>
<div class="t" style="right:441px;top:295px;">12:30:08 AM</div>
<svg style="left:468px;top:309px" width="16" height="16" viewBox="0 0 16 16"><use href="#fold"/></svg>
<div class="t" style="left:486.0px;top:312px;letter-spacing:-0.824px;">Local</div>
<div class="t" style="right:579.5px;top:312px;letter-spacing:.5px">DIR</div>
<div class="t" style="right:514px;top:312px;letter-spacing:.15px">02/21/2018</div>
<div class="t" style="right:441px;top:312px;">08:34:18 AM</div>
<svg style="left:468px;top:326px" width="16" height="16" viewBox="0 0 16 16"><use href="#fold"/></svg>
<div class="t" style="left:486.0px;top:329px;letter-spacing:0.352px;">out</div>
<div class="t" style="right:579.5px;top:329px;letter-spacing:.5px">DIR</div>
<div class="t" style="right:514px;top:329px;letter-spacing:.15px">02/05/2019</div>
<div class="t" style="right:441px;top:329px;">12:24:16 AM</div>
<svg style="left:468px;top:343px" width="16" height="16" viewBox="0 0 16 16"><use href="#fold"/></svg>
<div class="t" style="left:486.0px;top:346px;letter-spacing:-0.433px;">PerfLogs</div>
<div class="t" style="right:579.5px;top:346px;letter-spacing:.5px">DIR</div>
<div class="t" style="right:514px;top:346px;letter-spacing:.15px">07/13/2009</div>
<div class="t" style="right:441px;top:346px;">10:20:08 PM</div>
<svg style="left:468px;top:360px" width="16" height="16" viewBox="0 0 16 16"><use href="#fold"/></svg>
<div class="t" style="left:486.0px;top:363px;letter-spacing:-0.454px;">Program Files</div>
<div class="t" style="right:579.5px;top:363px;letter-spacing:.5px">DIR</div>
<div class="t" style="right:514px;top:363px;letter-spacing:.15px">04/12/2011</div>
<div class="t" style="right:441px;top:363px;">03:28:15 AM</div>
<div class="t" style="right:399px;top:363px;">R</div>
<svg style="left:468px;top:377px" width="16" height="16" viewBox="0 0 16 16"><use href="#fold"/></svg>
<div class="t" style="left:486.0px;top:380px;letter-spacing:-0.254px;">Program Files (x86)</div>
<div class="t" style="right:579.5px;top:380px;letter-spacing:.5px">DIR</div>
<div class="t" style="right:514px;top:380px;letter-spacing:.15px">07/13/2009</div>
<div class="t" style="right:441px;top:380px;">11:57:06 PM</div>
<div class="t" style="right:399px;top:380px;">R</div>
<svg style="left:468px;top:394px" width="16" height="16" viewBox="0 0 16 16"><use href="#ffade"/></svg>
<div class="t" style="left:486.0px;top:397px;letter-spacing:-0.342px;">ProgramData</div>
<div class="t" style="right:579.5px;top:397px;letter-spacing:.5px">DIR</div>
<div class="t" style="right:514px;top:397px;letter-spacing:.15px">07/14/2009</div>
<div class="t" style="right:441px;top:397px;">12:08:56 AM</div>
<div class="t" style="right:399px;top:397px;">H</div>
<svg style="left:468px;top:411px" width="16" height="16" viewBox="0 0 16 16"><use href="#ffade"/></svg>
<div class="t" style="left:486.0px;top:414px;letter-spacing:-0.208px;">Recovery</div>
<div class="t" style="right:579.5px;top:414px;letter-spacing:.5px">DIR</div>
<div class="t" style="right:514px;top:414px;letter-spacing:.15px">02/20/2018</div>
<div class="t" style="right:441px;top:414px;">08:32:01 PM</div>
<div class="t" style="right:399px;top:414px;">HS</div>
<svg style="left:468px;top:428px" width="16" height="16" viewBox="0 0 16 16"><use href="#ffade"/></svg>
<div class="t" style="left:486.0px;top:431px;letter-spacing:-0.188px;">System Volume Information</div>
<div class="t" style="right:579.5px;top:431px;letter-spacing:.5px">DIR</div>
<div class="t" style="right:514px;top:431px;letter-spacing:.15px">12/14/2018</div>
<div class="t" style="right:441px;top:431px;">08:58:13 PM</div>
<div class="t" style="right:399px;top:431px;">HS</div>
<svg style="left:468px;top:445px" width="16" height="16" viewBox="0 0 16 16"><use href="#fsel"/></svg>
<div class="t r" style="left:486.0px;top:448px;letter-spacing:-1.609px;">TMP</div>
<div class="t n r" style="right:580px;top:448px;">10,406,869,066</div>
<div class="t r" style="right:514px;top:448px;letter-spacing:.15px">02/04/2019</div>
<div class="t r" style="right:441px;top:448px;">08:02:59 PM</div>
<svg style="left:468px;top:462px" width="16" height="16" viewBox="0 0 16 16"><use href="#fold"/></svg>
<div class="t" style="left:486.0px;top:465px;letter-spacing:-0.43px;">Users</div>
<div class="t" style="right:579.5px;top:465px;letter-spacing:.5px">DIR</div>
<div class="t" style="right:514px;top:465px;letter-spacing:.15px">02/20/2018</div>
<div class="t" style="right:441px;top:465px;">08:32:06 PM</div>
<div class="t" style="right:399px;top:465px;">R</div>
<svg style="left:468px;top:479px" width="16" height="16" viewBox="0 0 16 16"><use href="#fold"/></svg>
<div class="t" style="left:486.0px;top:482px;letter-spacing:-0.438px;">Windows</div>
<div class="t" style="right:579.5px;top:482px;letter-spacing:.5px">DIR</div>
<div class="t" style="right:514px;top:482px;letter-spacing:.15px">02/20/2018</div>
<div class="t" style="right:441px;top:482px;">08:56:47 PM</div>
<svg style="left:468px;top:496px" width="16" height="16" viewBox="0 0 16 16"><use href="#fold"/></svg>
<div class="t" style="left:486.0px;top:499px;letter-spacing:-0.63px;">WLIB</div>
<div class="t" style="right:579.5px;top:499px;letter-spacing:.5px">DIR</div>
<div class="t" style="right:514px;top:499px;letter-spacing:.15px">09/10/2018</div>
<div class="t" style="right:441px;top:499px;">07:37:37 PM</div>
<svg style="left:468px;top:513px" width="16" height="16" viewBox="0 0 16 16"><use href="#fold"/></svg>
<div class="t" style="left:486.0px;top:516px;letter-spacing:-1.188px;">XOUT</div>
<div class="t" style="right:579.5px;top:516px;letter-spacing:.5px">DIR</div>
<div class="t" style="right:514px;top:516px;letter-spacing:.15px">02/06/2019</div>
<div class="t" style="right:441px;top:516px;">01:09:16 AM</div>
<svg style="left:468px;top:530px" width="16" height="16" viewBox="0 0 16 16"><use href="#sys"/></svg>
<div class="t" style="left:486.0px;top:533px;letter-spacing:-0.009px;">pagefile.sys</div>
<div class="t n" style="right:580px;top:533px;">16,860,205,056</div>
<div class="t" style="right:514px;top:533px;letter-spacing:.15px">02/20/2018</div>
<div class="t" style="right:441px;top:533px;">11:28:46 PM</div>
<div class="t" style="right:399px;top:533px;">HSA</div>
<div style="left:13px;top:715px;width:901px;height:19px;border:1px solid;border-color:#808080 #fff #fff #808080;background:#fff"></div>
<div class="t" style="left:16.0px;top:719px;letter-spacing:0.839px;">C:\&gt;</div>
<div style="left:897px;top:716px;width:16px;height:17px;background:#d4d0c8;border:1px solid;border-color:#fff #808080 #808080 #fff"><svg style="left:4px;top:6px" width="7" height="4" viewBox="0 0 7 4"><path d="M0 0h7L3.5 4z" fill="#000"/></svg></div>
<div style="left:16px;top:738px;width:17px;height:13px;border:1px solid #4a4a4a;border-radius:2px"></div>
<div class="t" style="left:20px;top:738px;font-size:9.5px;color:#000;letter-spacing:-.5px">F1</div>
<div class="t" style="left:34.0px;top:739px;letter-spacing:-0.542px;color:#000">Help</div>
<div style="left:78px;top:738px;width:17px;height:13px;border:1px solid #4a4a4a;border-radius:2px"></div>
<div class="t" style="left:82px;top:738px;font-size:9.5px;color:#000;letter-spacing:-.5px">F2</div>
<div class="t" style="left:96.0px;top:739px;letter-spacing:-0.516px;color:#000">Rename</div>
<div style="left:142px;top:739px;width:17px;height:13px;border:1px solid #fff;border-radius:2px"></div>
<div style="left:141px;top:738px;width:17px;height:13px;border:1px solid #8a8a8a;border-radius:2px"></div>
<div class="t" style="left:145px;top:738px;font-size:9.5px;color:#808080;letter-spacing:-.5px;text-shadow:1px 1px 0 #fff">F3</div>
<div class="t" style="left:159.0px;top:739px;letter-spacing:-0.562px;color:#808080;text-shadow:1px 1px 0 #fff">View</div>
<div style="left:212px;top:739px;width:17px;height:13px;border:1px solid #fff;border-radius:2px"></div>
<div style="left:211px;top:738px;width:17px;height:13px;border:1px solid #8a8a8a;border-radius:2px"></div>
<div class="t" style="left:215px;top:738px;font-size:9.5px;color:#808080;letter-spacing:-.5px;text-shadow:1px 1px 0 #fff">F4</div>
<div class="t" style="left:229.0px;top:739px;letter-spacing:-0.318px;color:#808080;text-shadow:1px 1px 0 #fff">Edit</div>
<div style="left:275px;top:738px;width:17px;height:13px;border:1px solid #4a4a4a;border-radius:2px"></div>
<div class="t" style="left:279px;top:738px;font-size:9.5px;color:#000;letter-spacing:-.5px">F5</div>
<div class="t" style="left:293.0px;top:739px;letter-spacing:-0.224px;color:#000">Copy</div>
<div style="left:337px;top:738px;width:17px;height:13px;border:1px solid #4a4a4a;border-radius:2px"></div>
<div class="t" style="left:341px;top:738px;font-size:9.5px;color:#000;letter-spacing:-.5px">F6</div>
<div class="t" style="left:355.0px;top:739px;letter-spacing:-0.302px;color:#000">Move</div>
<div style="left:398px;top:738px;width:17px;height:13px;border:1px solid #4a4a4a;border-radius:2px"></div>
<div class="t" style="left:402px;top:738px;font-size:9.5px;color:#000;letter-spacing:-.5px">F7</div>
<div class="t" style="left:416.0px;top:739px;letter-spacing:-0.659px;color:#000">MakeDir</div>
<div style="left:460px;top:738px;width:17px;height:13px;border:1px solid #4a4a4a;border-radius:2px"></div>
<div class="t" style="left:464px;top:738px;font-size:9.5px;color:#000;letter-spacing:-.5px">F8</div>
<div class="t" style="left:478.0px;top:739px;letter-spacing:-0.159px;color:#000">Delete</div>
<div style="left:515px;top:738px;width:17px;height:13px;border:1px solid #4a4a4a;border-radius:2px"></div>
<div class="t" style="left:519px;top:738px;font-size:9.5px;color:#000;letter-spacing:-.5px">F9</div>
<div class="t" style="left:533.0px;top:739px;letter-spacing:-0.438px;color:#000">UsrMenu</div>
<div style="left:583px;top:738px;width:17px;height:13px;border:1px solid #4a4a4a;border-radius:2px"></div>
<div class="t" style="left:584.5px;top:738px;font-size:9.5px;color:#000;letter-spacing:-.9px;font-size:9px">F10</div>
<div class="t" style="left:601.0px;top:739px;letter-spacing:-0.839px;color:#000">Menu</div>
<div style="left:650px;top:738px;width:17px;height:13px;border:1px solid #4a4a4a;border-radius:2px"></div>
<div class="t" style="left:651.5px;top:738px;font-size:9.5px;color:#000;letter-spacing:-.9px;font-size:9px">F11</div>
<div class="t" style="left:668.0px;top:739px;letter-spacing:-0.161px;color:#000">Connect</div>
<div style="left:723px;top:738px;width:17px;height:13px;border:1px solid #4a4a4a;border-radius:2px"></div>
<div class="t" style="left:724.5px;top:738px;font-size:9.5px;color:#000;letter-spacing:-.9px;font-size:9px">F12</div>
<div class="t" style="left:741.0px;top:739px;letter-spacing:-0.269px;color:#000">Disconnect</div>
<div style="left:916px;top:95px;width:367px;height:473px;background:#d4d0c8;border:1px solid;border-color:#d4d0c8 #404040 #404040 #d4d0c8;box-shadow:inset 1px 1px 0 #fff, inset -1px -1px 0 #808080"></div>
<div style="left:919px;top:98px;width:361px;height:18px;background:linear-gradient(90deg,#0a246a,#a6caf0)"></div>
<svg style="left:921px;top:99px" width="16" height="16" viewBox="0 0 16 16"><use href="#fold"/></svg>
<div class="t" style="left:940.0px;top:101px;letter-spacing:0.347px;font-weight:bold;color:#fff">TMP Properties</div>
<div class="btn" style="left:1262px;top:100px;width:16px;height:14px;"><svg style="left:3px;top:2px" width="8" height="7" viewBox="0 0 8 7"><path d="M0 0h2l2 2.5L6 0h2L5 3.5 8 7H6L4 4.5 2 7H0l3-3.5z" fill="#000"/></svg></div>
<div style="left:925px;top:144px;width:349px;height:385px;border:1px solid;border-color:#fff #404040 #404040 #fff;box-shadow:inset -1px -1px 0 #808080"></div>
<div style="left:978px;top:126px;width:46px;height:18px;border:1px solid;border-color:#fff #404040 transparent #fff;border-bottom:none;border-radius:2px 2px 0 0;box-shadow:inset -1px 0 0 #808080"></div>
<div class="t d" style="left:983.0px;top:129px;letter-spacing:-1.06px;">Sharing</div>
<div style="left:1024px;top:126px;width:50px;height:18px;border:1px solid;border-color:#fff #404040 transparent #fff;border-bottom:none;border-radius:2px 2px 0 0;box-shadow:inset -1px 0 0 #808080"></div>
<div class="t d" style="left:1031.0px;top:129px;letter-spacing:-0.906px;">Security</div>
<div style="left:1074px;top:126px;width:97px;height:18px;border:1px solid;border-color:#fff #404040 transparent #fff;border-bottom:none;border-radius:2px 2px 0 0;box-shadow:inset -1px 0 0 #808080"></div>
<div class="t d" style="left:1080.0px;top:129px;letter-spacing:-0.753px;">Previous Versions</div>
<div style="left:1171px;top:126px;width:61px;height:18px;border:1px solid;border-color:#fff #404040 transparent #fff;border-bottom:none;border-radius:2px 2px 0 0;box-shadow:inset -1px 0 0 #808080"></div>
<div class="t d" style="left:1176.0px;top:129px;letter-spacing:-1.086px;">Customize</div>
<div style="left:925px;top:124px;width:53px;height:22px;background:#d4d0c8;border:1px solid;border-color:#fff #404040 transparent #fff;border-bottom:none;border-radius:2px 2px 0 0;box-shadow:inset -1px 0 0 #808080"></div>
<div class="t d" style="left:933.0px;top:127px;letter-spacing:-0.948px;">General</div>
<svg style="left:941px;top:156px" width="34" height="34" viewBox="0 0 34 34"><defs><linearGradient id="gbf" x1="0" y1="0" x2="0" y2="1"><stop offset="0" stop-color="#fbf1b8"/><stop offset=".6" stop-color="#f6e69a"/><stop offset=".65" stop-color="#ecd36c"/><stop offset="1" stop-color="#e8cc5e"/></linearGradient><linearGradient id="gbb" x1="0" y1="0" x2="0" y2="1"><stop offset="0" stop-color="#f4e6a4"/><stop offset="1" stop-color="#e2c45a"/></linearGradient><radialGradient id="gsh"><stop offset="0" stop-color="#000" stop-opacity=".22"/><stop offset="1" stop-color="#000" stop-opacity="0"/></radialGradient></defs><ellipse cx="25" cy="27" rx="8" ry="6" fill="url(#gsh)"/><path d="M9 2.5L21 4V30.5L9 31.5z" fill="url(#gbb)"/><path d="M10 4L20 5V8L10 9z" fill="#fbf3c8" opacity=".7"/><rect x="20" y="20" width="3" height="10.5" fill="#e3c760"/><rect x="20" y="22" width="1.6" height="5" fill="#fff"/><rect x="20" y="27" width="1.6" height="2.5" fill="#4a98e0"/><path d="M1 2L3.5 1L9 4.5V31L5.5 33L1 29z" fill="url(#gbf)"/><path d="M8.3 5V24" stroke="#fffbe6" stroke-width="1.4"/><path d="M9.3 6V31" stroke="#d2ae48" stroke-width=".8"/></svg>
<div style="left:1013px;top:164px;width:246px;height:22px;background:#fff;border:1px solid;border-color:#808080 #fff #fff #808080;box-shadow:inset 1px 1px 0 #404040, inset -1px -1px 0 #d4d0c8"></div>
<div class="t d" style="left:1017.0px;top:167px;letter-spacing:-1.664px;">TMP</div>
<div style="left:940px;top:199px;width:319px;height:1px;background:#808080"></div>
<div style="left:940px;top:200px;width:319px;height:1px;background:#fff"></div>
<div class="t d" style="left:941.0px;top:211px;letter-spacing:-0.836px;">Type:</div>
<div class="t d" style="left:1013.0px;top:211px;letter-spacing:-0.769px;">File folder</div>
<div class="t d" style="left:941.0px;top:237px;letter-spacing:-0.713px;">Location:</div>
<div class="t d" style="left:1013.0px;top:237px;letter-spacing:0.328px;">C:\</div>
<div class="t d" style="left:941.0px;top:263px;letter-spacing:-1.168px;">Size:</div>
<div class="t d" style="left:1013.0px;top:263px;letter-spacing:-0.648px;">9.69 GB (10,406,869,066 bytes)</div>
<div class="t d" style="left:941.0px;top:289px;letter-spacing:-0.753px;">Size on disk:</div>
<div class="t d" style="left:1013.0px;top:289px;letter-spacing:-0.648px;">9.75 GB (10,470,563,840 bytes)</div>
<div class="t d" style="left:941.0px;top:315px;letter-spacing:-0.963px;">Contains:</div>
<div class="t d" style="left:1013.0px;top:315px;letter-spacing:-0.709px;">28,389 Files, 5,235 Folders</div>
<div style="left:940px;top:341px;width:319px;height:1px;background:#808080"></div>
<div style="left:940px;top:342px;width:319px;height:1px;background:#fff"></div>
<div class="t d" style="left:941.0px;top:354px;letter-spacing:-1.004px;">Created:</div>
<div class="t d" style="left:1013.0px;top:354px;letter-spacing:-0.612px;">Tuesday, February 20, 2018, 11:00:59 PM</div>
<div style="left:940px;top:380px;width:319px;height:1px;background:#808080"></div>
<div style="left:940px;top:381px;width:319px;height:1px;background:#fff"></div>
<div class="t d" style="left:941.0px;top:393px;letter-spacing:-0.803px;">Attributes:</div>
<div class="chk" style="left:1013px;top:394px;width:13px;height:13px;border:1px solid;border-color:#808080 #fff #fff #808080;box-shadow:inset 1px 1px 0 #404040, inset -1px -1px 0 #d4d0c8;"><svg style="left:2px;top:2px" width="7" height="7" viewBox="0 0 7 7"><path d="M0 2v3l2 2 5-5V-1L2 4z" fill="#808080"/></svg></div>
<div style="left:1013px;top:417px;width:13px;height:13px;border:1px solid;border-color:#808080 #fff #fff #808080;box-shadow:inset 1px 1px 0 #404040, inset -1px -1px 0 #d4d0c8;background:#fff"></div>
<div style="left:1030px;top:393px;width:190px;height:16px;border:1px dotted #000"></div>
<div class="t d" style="left:1032.0px;top:394px;letter-spacing:-0.717px;"><u>R</u>ead-only (Only applies to files in folder)</div>
<div class="t d" style="left:1032.0px;top:417px;letter-spacing:-1.006px;"><u>H</u>idden</div>
<div class="btn" style="left:1153px;top:413px;width:105px;height:23px;"></div>
<div class="t d" style="left:1176.0px;top:417px;letter-spacing:-0.537px;">A<u>d</u>vanced...</div>
<div style="left:1037px;top:536px;width:75px;height:23px;border:1px solid #000"></div>
<div class="btn" style="left:1038px;top:537px;width:73px;height:21px;"></div>
<div class="t d" style="left:1066.0px;top:540px;letter-spacing:-0.344px;">OK</div>
<div class="btn" style="left:1118px;top:536px;width:75px;height:23px;"></div>
<div class="t d" style="left:1138.0px;top:540px;letter-spacing:-0.672px;">Cancel</div>
<div class="btn" style="left:1199px;top:536px;width:75px;height:23px;"></div>
<div class="t d" style="left:1223.0px;top:540px;letter-spacing:-0.754px;color:#808080;text-shadow:1px 1px 0 #fff"><u>A</u>pply</div>
</body></html>
